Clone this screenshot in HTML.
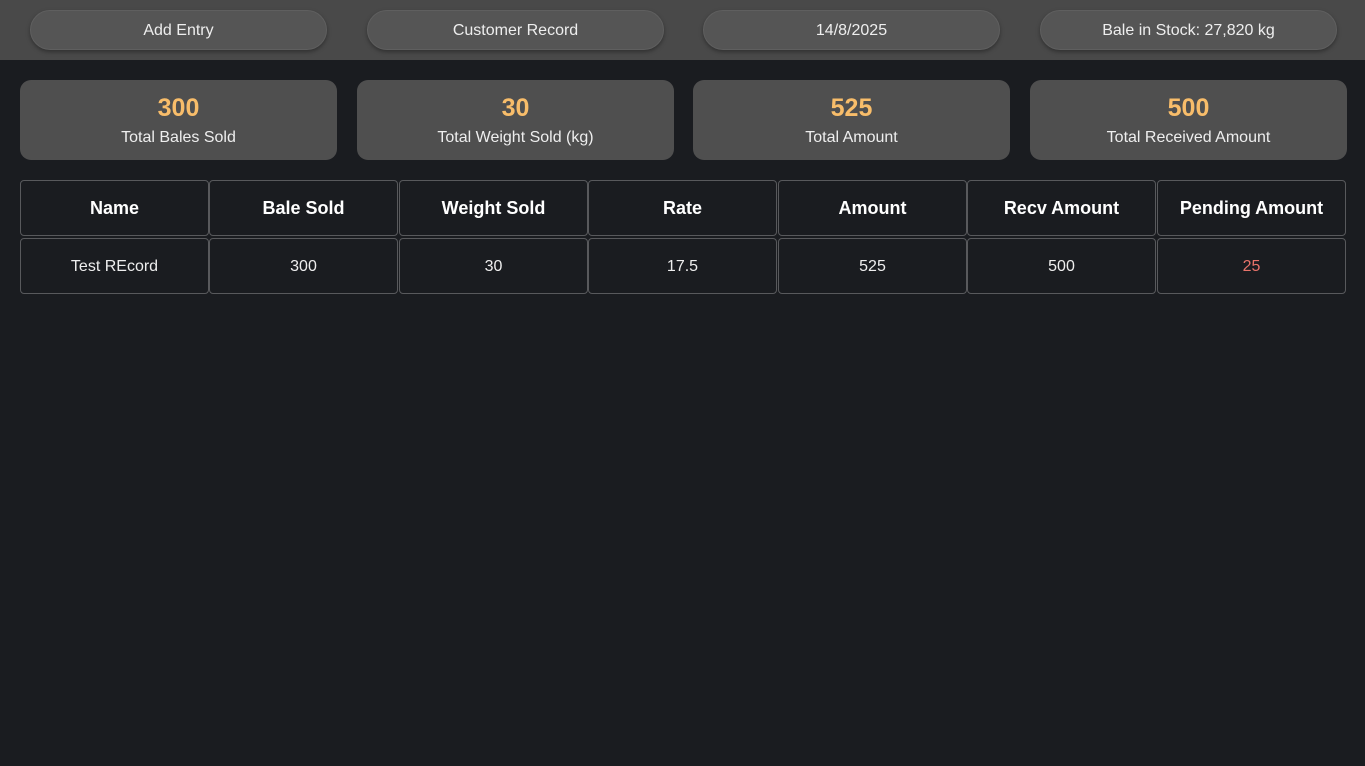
<!DOCTYPE html>
<html><head><style>
body{margin:0;background:#1a1c20;font-family:"Liberation Sans",sans-serif;width:1365px;height:766px;overflow:hidden}
.hdr{height:60px;background:#494949;position:relative}
.btn{position:absolute;top:10px;width:295px;height:38px;border-radius:20px;background:#555;border:1px solid #5f5f5f;box-shadow:0 2px 4px rgba(0,0,0,.35);color:#eee;font-size:16px;text-align:center;line-height:40px}
.card{position:absolute;top:80px;width:317px;height:80px;border-radius:11px;background:#4f4f4f;text-align:center;color:#eee}
.card b{display:block;color:#f8bd6a;font-size:25px;margin-top:14px;line-height:28px}
.card span{display:block;font-size:16px;margin-top:7px}
.cell{position:absolute;width:187px;height:54px;border:1px solid #58595c;border-radius:4px;color:#eee;text-align:center;line-height:56px;font-size:16px}
.h{font-weight:bold;font-size:18px;color:#fff;line-height:55px}
</style></head><body>
<div class="hdr">
<div class="btn" style="left:30px">Add Entry</div>
<div class="btn" style="left:367px">Customer Record</div>
<div class="btn" style="left:703px">14/8/2025</div>
<div class="btn" style="left:1040px">Bale in Stock: 27,820 kg</div>
</div>
<div class="card" style="left:20px"><b>300</b><span>Total Bales Sold</span></div>
<div class="card" style="left:357px"><b>30</b><span>Total Weight Sold (kg)</span></div>
<div class="card" style="left:693px"><b>525</b><span>Total Amount</span></div>
<div class="card" style="left:1030px"><b>500</b><span>Total Received Amount</span></div>
<div class="cell h" style="left:20px;top:180px">Name</div>
<div class="cell h" style="left:209px;top:180px">Bale Sold</div>
<div class="cell h" style="left:399px;top:180px">Weight Sold</div>
<div class="cell h" style="left:588px;top:180px">Rate</div>
<div class="cell h" style="left:778px;top:180px">Amount</div>
<div class="cell h" style="left:967px;top:180px">Recv Amount</div>
<div class="cell h" style="left:1157px;top:180px">Pending Amount</div>
<div class="cell" style="left:20px;top:238px">Test REcord</div>
<div class="cell" style="left:209px;top:238px">300</div>
<div class="cell" style="left:399px;top:238px">30</div>
<div class="cell" style="left:588px;top:238px">17.5</div>
<div class="cell" style="left:778px;top:238px">525</div>
<div class="cell" style="left:967px;top:238px">500</div>
<div class="cell" style="left:1157px;top:238px;color:#e8736a">25</div>
</body></html>
